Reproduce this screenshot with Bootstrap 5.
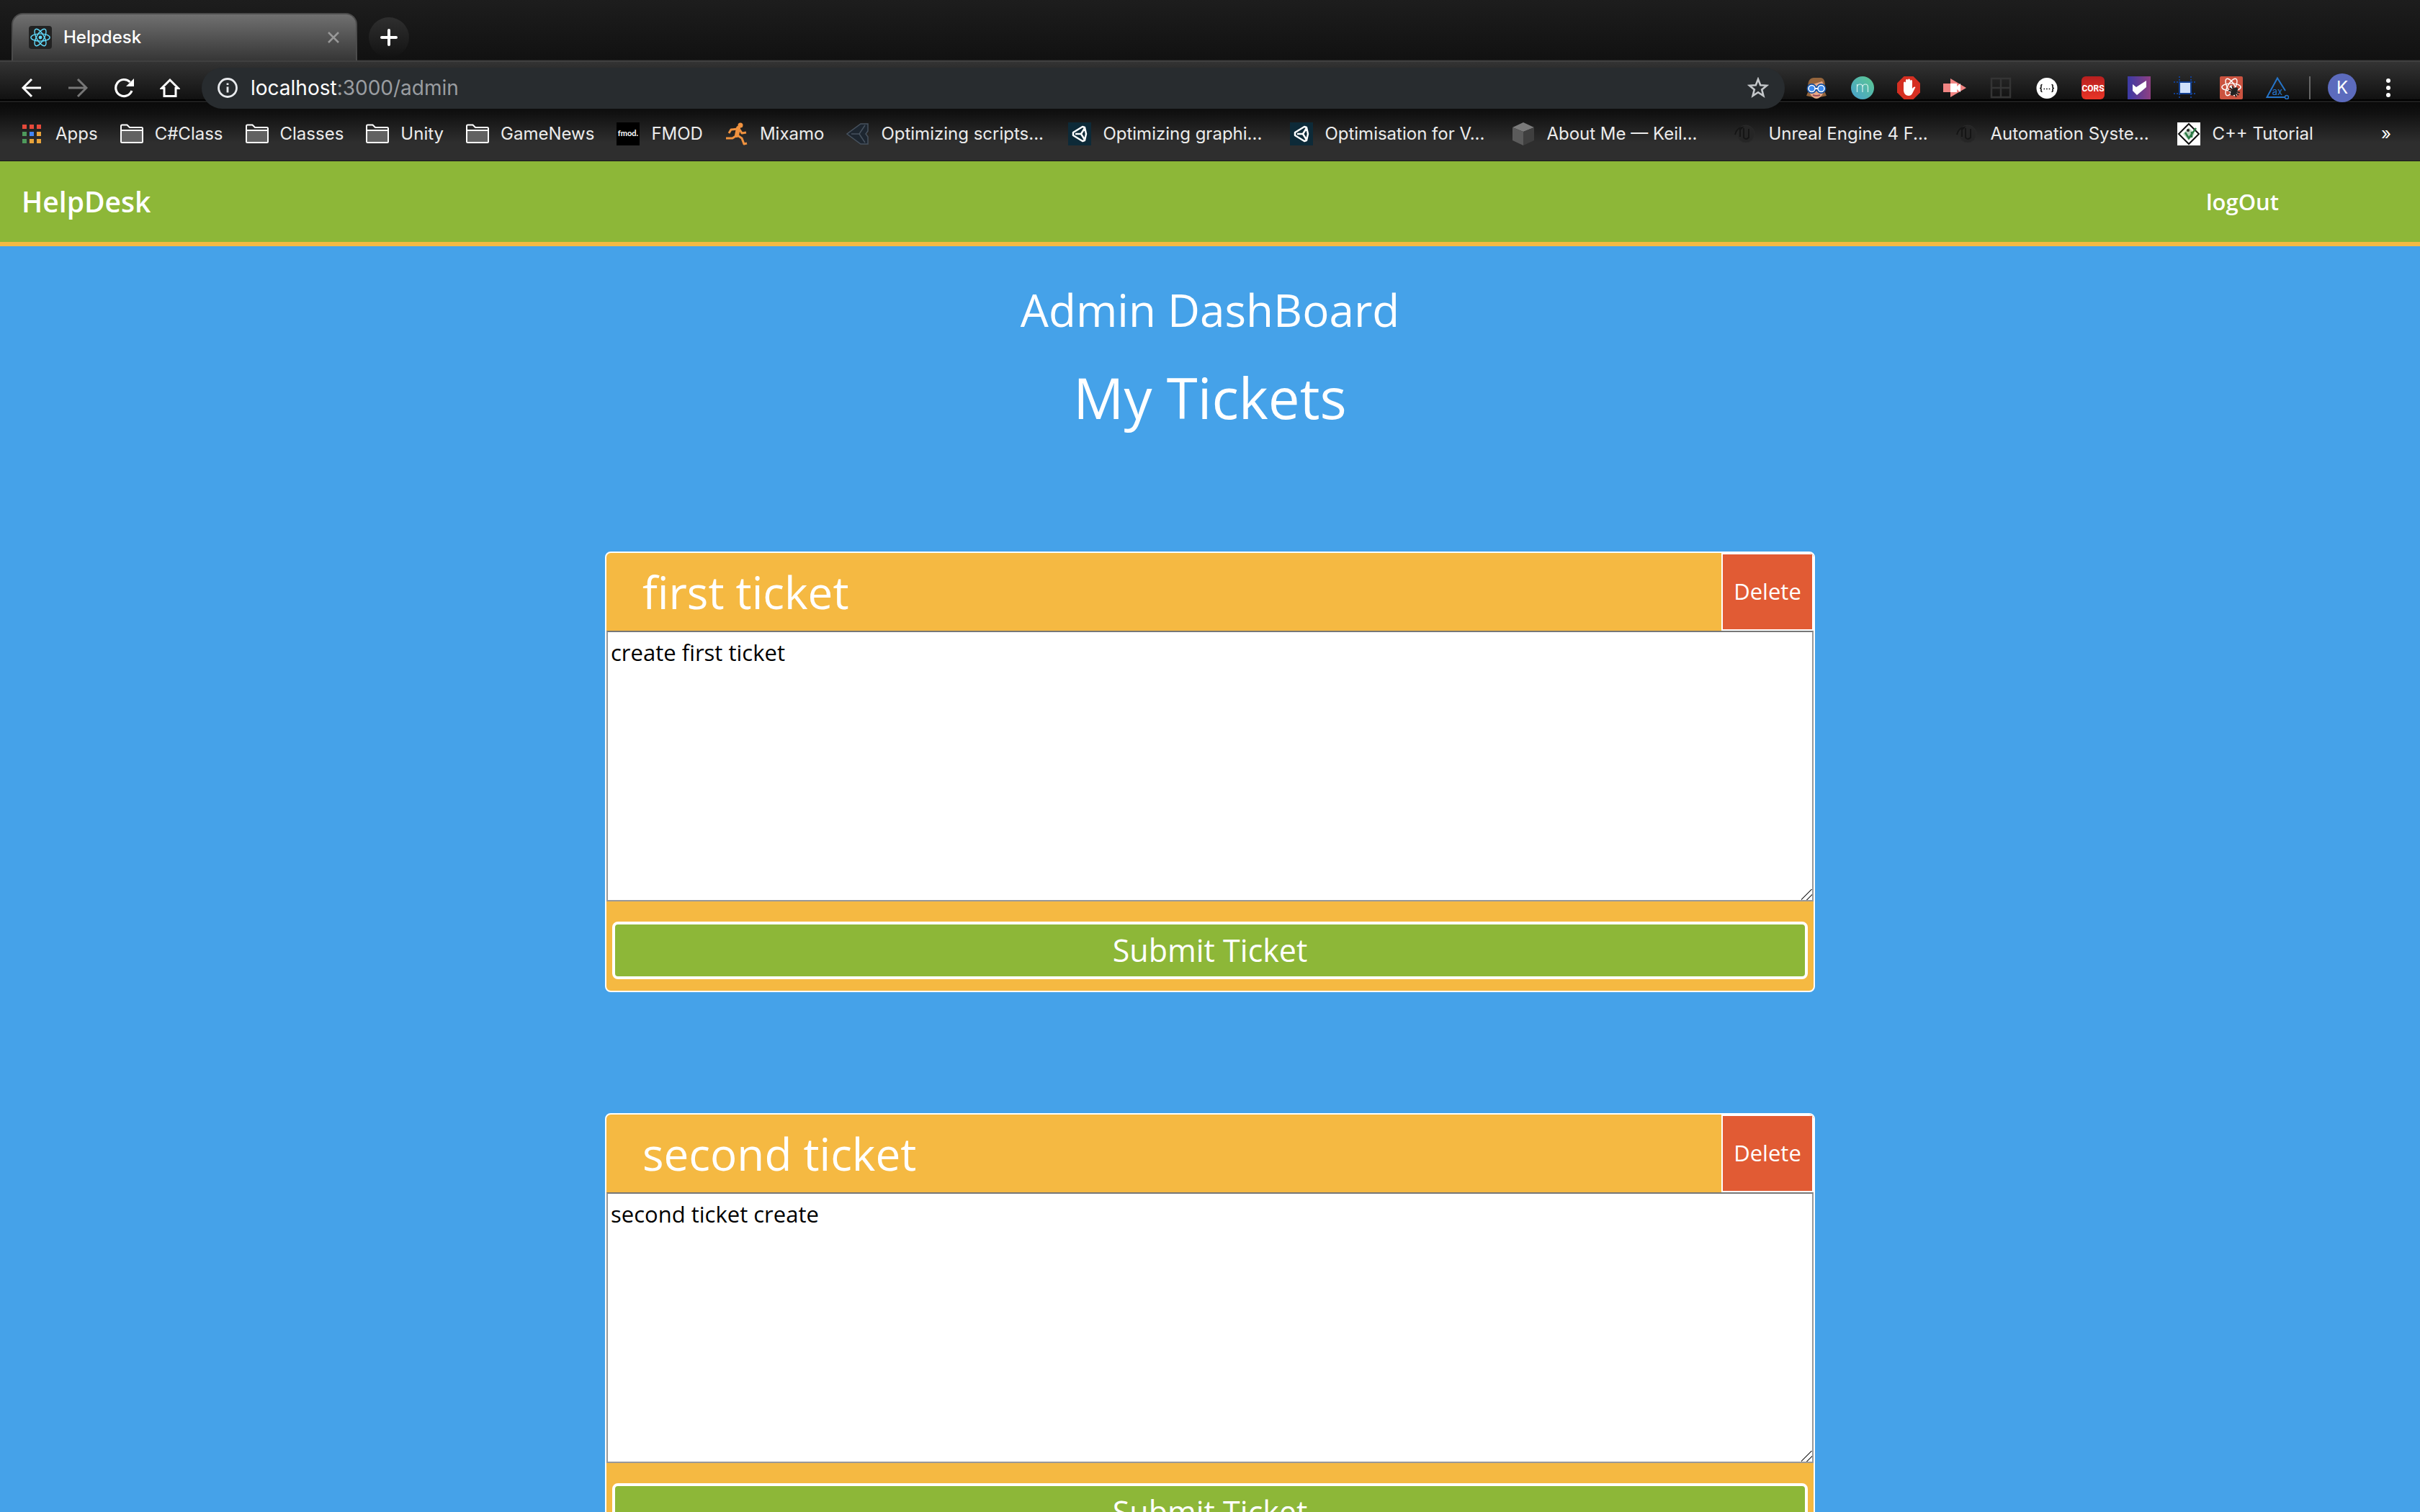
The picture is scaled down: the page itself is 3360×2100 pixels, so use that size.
<!DOCTYPE html>
<html lang="en">
<head>
<meta charset="utf-8">
<meta name="viewport" content="width=device-width, initial-scale=1">
<title>Helpdesk</title>
<link href="https://cdn.jsdelivr.net/npm/bootstrap@5.3.0/dist/css/bootstrap.min.css" rel="stylesheet">
<script src="https://cdn.jsdelivr.net/npm/bootstrap@5.3.0/dist/js/bootstrap.bundle.min.js"></script>
<style>
  :root {
    --sky: #45a2e9;
    --leaf: #8db738;
    --sun: #f5b942;
    --brick: #e15b34;
  }
  body { background: var(--sky); font-family: "Open Sans", "Noto Sans", sans-serif; }
  svg { display: block; flex: none; }
  .plain-btn { background: none; border: 0; padding: 0; color: inherit; }

  /* browser frame */
  .browser-ui { font-family: Inter, Roboto, sans-serif; color: #fff; }
  .tab-strip { height: 84px; padding-left: 16px; background: linear-gradient(#1d1d1d, #111); box-shadow: inset 0 -1px #222; }
  .browser-tab {
    width: 480px; height: 66px; padding: 0 22px;
    border: 2px solid #4b4b4b; border-bottom: 0; border-radius: 16px 16px 0 0;
    background: linear-gradient(#707070, #363636);
    font-size: 24px; line-height: 32px; font-weight: 500;
  }
  .tab-label { margin-left: 16px; }
  .tab-plus { width: 56px; height: 56px; margin: 0 0 4px 16px; border-radius: 50%; background: linear-gradient(#2f2f2f, #121212); }
  .tool-row {
    height: 76px; padding: 0 38px 0 30px;
    background: linear-gradient(#404040 0 2px, #333 2px, #111 54px, #000 54px 56px, #1e1e1e 56px 58px, #0a0a0a 58px, #121212);
  }
  .tool-group { gap: 36px; }
  .address-box {
    height: 57px; margin: 0 28px 0 30px; padding: 0 22px; border-radius: 29px;
    background: #282c2f; font-size: 28px; line-height: 36px;
  }
  .url-text { margin-left: 18px; }
  .url-dim { color: #9a9da1; }
  .ext-group { gap: 32px; }
  .tool-rule { width: 2px; height: 32px; margin: 0 24px 0 28px; background: #666; }
  .avatar-k { width: 40px; height: 40px; border-radius: 50%; background: #5c6bbd; font-size: 24px; line-height: 40px; }
  .menu-dots { margin-left: 38px; }
  .link-row {
    height: 64px; padding: 0 40px 12px 29px; border-bottom: 1px solid #1b1b1b;
    background: linear-gradient(#131313, #2e2e2e 60%);
    font-size: 24px; line-height: 32px;
  }
  .link-row a { color: #ececec; text-decoration: none; display: flex; align-items: center; gap: 16px; margin-right: 31px; white-space: nowrap; }
  .link-row a.wide-link { width: 308px; margin-right: 0; }

  /* application */
  .app-bar { height: 118px; background: var(--leaf); border-bottom: 6px solid var(--sun); padding: 0 196px 0 30px; }
  .app-bar a { color: #fff; text-decoration: none; font-weight: 600; }
  .app-name { font-size: 39px; line-height: 56px; }
  .app-exit { font-size: 31px; line-height: 48px; }
  .page-head { padding-top: 44px; color: #fff; }
  .page-head h2 { font-size: 62px; line-height: 88px; font-weight: 400; margin: 0 0 24px; }
  .page-head h1 { font-size: 78px; line-height: 108px; font-weight: 400; margin: 0; }
  .ticket-list { width: 50%; padding-top: 160px; }
  .ticket { background: var(--sun); border: 2px solid #fff; border-radius: 8px; margin-bottom: 168px; overflow: hidden; }
  .ticket-top { height: 108px; padding-left: 50px; color: #fff; }
  .ticket-top h3 { font-size: 62px; line-height: 88px; font-weight: 400; margin: 0; }
  .ticket-delete { width: 128px; padding-bottom: 4px; background: var(--brick); border: 2px solid #fff; color: #fff; font-size: 31px; line-height: 48px; }
  .ticket textarea {
    display: block; width: 100%; height: 376px; padding: 5px 4px;
    border: 2px solid #999; border-top-color: #777; outline: 0; background: #fff; color: #000; font-size: 31px; line-height: 46px;
  }
  .ticket textarea::-webkit-resizer {
    background: linear-gradient(135deg, transparent 46%, #555 46% 53%, transparent 53% 72%, #555 72% 79%, transparent 79%) #fff;
  }
  .ticket-foot { padding: 28px 8px 16px; }
  .ticket-submit { height: 80px; background: var(--leaf); border: 4px solid #fff; border-radius: 8px; color: #fff; font-size: 43px; line-height: 64px; }
</style>
</head>
<body class="vh-100 overflow-hidden d-flex flex-column">

<svg width="0" height="0" class="position-absolute" aria-hidden="true">
  <defs>
    <symbol id="folder" viewBox="0 0 32 32"><path d="M1 27V5q0-1.500 1.500-1.500H9.500L13 7H29.500Q31 7 31 8.500V26.500Q31 28 29.500 28H2.500Q1 28 1 26.500Z" fill="#2a2a2a" stroke="#fff" stroke-width="2"/><path d="M2 12H30V27H2Z" fill="#626262"/><path d="M1 11H31" stroke="#fff" stroke-width="2"/></symbol>
    <symbol id="unity" viewBox="0 0 32 32"><path d="M0 0H32V32H0Z" fill="#0d2a38"/><path d="M23 7 20 6 7 14V18L20 26 23 25 25 16ZM10 16H18M18 16 23 8M18 16 23 24" fill="none" stroke="#fff" stroke-width="2.500" stroke-linejoin="round"/></symbol>
    <symbol id="unreal" viewBox="0 0 32 32"><circle cx="17" cy="16" r="12" fill="#252525" stroke="#2a2a2a"/><path d="M2 17Q4 8 12 7L9 10V20M14 8V21Q17 25 21 21V9" fill="none" stroke="#151515" stroke-width="2"/></symbol>
    <symbol id="atom" viewBox="0 0 32 32"><g fill="none" stroke="currentColor" stroke-width="1.500"><ellipse cx="16" cy="16" rx="14" ry="5.500"/><ellipse cx="16" cy="16" rx="14" ry="5.500" transform="rotate(60 16 16)"/><ellipse cx="16" cy="16" rx="14" ry="5.500" transform="rotate(120 16 16)"/></g><circle cx="16" cy="16" r="2.600" fill="currentColor"/></symbol>
  </defs>
</svg>

<header class="browser-ui flex-shrink-0">
  <div class="tab-strip d-flex align-items-end">
    <div class="browser-tab d-flex align-items-center">
      <svg width="32" height="32" viewBox="0 0 32 32"><rect width="32" height="32" rx="4" fill="#222"/><use href="#atom" x="1" y="1" width="30" height="30" color="#61dafb"/></svg>
      <span class="tab-label">Helpdesk</span>
      <button class="plain-btn ms-auto" aria-label="Close tab"><svg width="18" height="18" viewBox="0 0 18 18"><path d="M2 2 16 16M16 2 2 16" stroke="#999" stroke-width="2.500"/></svg></button>
    </div>
    <button class="plain-btn tab-plus d-flex align-items-center justify-content-center" aria-label="New tab"><svg width="24" height="24" viewBox="0 0 24 24"><path d="M12 2V22M2 12H22" stroke="#fff" stroke-width="4" stroke-linecap="round"/></svg></button>
  </div>

  <div class="tool-row d-flex align-items-center">
    <div class="tool-group d-flex">
      <button class="plain-btn" aria-label="Back"><svg width="28" height="28" viewBox="0 0 28 28"><path d="M27 14H3M14 2 2 14 14 26" fill="none" stroke="#fff" stroke-width="3"/></svg></button>
      <button class="plain-btn" aria-label="Forward"><svg width="28" height="28" viewBox="0 0 28 28"><path d="M1 14H25M14 2 26 14 14 26" fill="none" stroke="#777" stroke-width="3"/></svg></button>
      <button class="plain-btn" aria-label="Reload"><svg width="28" height="28" viewBox="0 0 28 28"><path d="M25 18A11.500 11.500 0 1 1 22.500 6" fill="none" stroke="#fff" stroke-width="3.200"/><path d="M28 1V12H17Z" fill="#fff"/></svg></button>
      <button class="plain-btn" aria-label="Home"><svg width="28" height="28" viewBox="0 0 28 28"><path d="M2.500 14.500 14 3 25.500 14.500H22V25.500H6V14.500Z" fill="none" stroke="#fff" stroke-width="3"/></svg></button>
    </div>
    <div class="address-box d-flex align-items-center flex-grow-1">
      <svg width="28" height="28" viewBox="0 0 28 28"><circle cx="14" cy="14" r="12.500" fill="none" stroke="#e8eaed" stroke-width="2.800"/><path d="M14 12.500V20.500M14 7.500V10" stroke="#e8eaed" stroke-width="2.800"/></svg>
      <span class="url-text">localhost<span class="url-dim">:3000/admin</span></span>
      <button class="plain-btn ms-auto" aria-label="Bookmark this page"><svg width="30" height="30" viewBox="0 0 30 30"><path d="M15 3 18.200 11.200 27 11.800 20.200 17.400 22.400 26 15 21.200 7.600 26 9.800 17.400 3 11.800 11.800 11.200Z" fill="none" stroke="#c4c7ca" stroke-width="2.600"/></svg></button>
    </div>
    <div class="ext-group d-flex">
      <svg width="32" height="32" viewBox="0 0 32 32"><path d="M2 27 5 20Q2 3 12 2H22Q30 3 27 20L30 27Q16 31 2 27Z" fill="#95653c"/><path d="M5 13 24 7 27 14 25 24Q21 31 16 31T7 24Z" fill="#e8a987"/><circle cx="9.500" cy="17" r="6" fill="#3f8cf0" stroke="#1450a0" stroke-width="2"/><circle cx="22.500" cy="17" r="6" fill="#3f8cf0" stroke="#1450a0" stroke-width="2"/><circle cx="9.500" cy="17" r="4.500" fill="none" stroke="#fff" stroke-width="1.500"/><circle cx="22.500" cy="17" r="4.500" fill="none" stroke="#fff" stroke-width="1.500"/><path d="M14 17H18" stroke="#fff" stroke-width="2"/><path d="M11 26Q16 28 21 26" stroke="#9c4a58" stroke-width="2" fill="none"/></svg>
      <svg width="32" height="32" viewBox="0 0 32 32"><defs><linearGradient id="mint" x1="1" y1="0" x2="0" y2="1"><stop stop-color="#5cc98f"/><stop offset="1" stop-color="#48a0cf"/></linearGradient></defs><circle cx="16" cy="16" r="16" fill="url(#mint)"/><path d="M8.500 22V11M8.500 15Q9 11 12.500 11T16 15V22M16 15Q16.500 11 20 11T23.500 15V22" fill="none" stroke="#d7f1ee" stroke-width="1.200"/></svg>
      <svg width="32" height="32" viewBox="0 0 32 32"><path d="M9.500 0H22.500L32 9.500V22.500L22.500 32H9.500L0 22.500V9.500Z" fill="#d52f22"/><path d="M9 19V9a1.500 1.500 0 0 1 3 0V5.500a1.500 1.500 0 0 1 3 0V5a1.500 1.500 0 0 1 3 0V6.500a1.500 1.500 0 0 1 3 0V17L23 15Q24.500 14 25.500 15L21 24Q19.500 27 16 27Q10 27 9 20Z" fill="#fff"/></svg>
      <svg width="32" height="32" viewBox="0 0 32 32"><path d="M0 10H10V3L32 16 10 29V22H0Z" fill="#f18583"/><path d="M10 10H19V14L24 10V22L19 18V22H10Z" fill="#fff"/></svg>
      <svg width="32" height="32" viewBox="0 0 32 32"><path d="M3 3H29V29H3ZM16 3V29M3 16H29" fill="none" stroke="#343434" stroke-width="2.500"/></svg>
      <svg width="32" height="32" viewBox="0 0 32 32"><circle cx="16" cy="16.500" r="14.500" fill="#fff"/><path d="M9.500 11.500Q7.500 11.500 8 14T6 16.500Q8.500 16.500 8 19T9.500 21.500M22.500 11.500Q24.500 11.500 24 14T26 16.500Q23.500 16.500 24 19T22.500 21.500" fill="none" stroke="#111" stroke-width="1.600"/><path d="M11.500 17.500H21" stroke="#111" stroke-width="1.600" stroke-dasharray="1.600 2"/></svg>
      <svg width="32" height="32" viewBox="0 0 32 32"><defs><linearGradient id="corsred" x2="0" y2="1"><stop stop-color="#b81f1f"/><stop offset="1" stop-color="#e93527"/></linearGradient></defs><rect width="32" height="32" rx="6" fill="url(#corsred)"/><text x="16" y="21" text-anchor="middle" font-family="Roboto, sans-serif" font-weight="700" font-size="12" fill="#fff">CORS</text></svg>
      <svg width="32" height="32" viewBox="0 0 32 32"><defs><linearGradient id="plum"><stop stop-color="#3b3aa5"/><stop offset="1" stop-color="#8f3f82"/></linearGradient></defs><rect width="32" height="32" fill="url(#plum)"/><path d="M7 11 12 15 26 6V15L13 26 7 20Z" fill="#fff"/></svg>
      <svg width="32" height="32" viewBox="0 0 32 32"><path d="M8 0V32M24 0V32M0 8H32M0 24H32" stroke="#123f91" stroke-width="2" stroke-dasharray="2 2"/><rect x="8" y="8" width="16" height="16" fill="#d0e1fb" stroke="#123f91" stroke-width="2"/></svg>
      <svg width="32" height="32" viewBox="0 0 32 32"><rect width="32" height="32" rx="2" fill="#cb5340"/><use href="#atom" x="1" y="0" width="30" height="30" color="#fff"/><g transform="rotate(40 20 21)"><ellipse cx="20" cy="21" rx="3.500" ry="7" fill="#222"/><path d="M13 17 27 25M13 25 27 17M12 21H28" stroke="#222" stroke-width="1.800"/></g></svg>
      <svg width="32" height="32" viewBox="0 0 32 32"><path d="M27 20 16 2.500 1.500 29H26" fill="none" stroke="#2675c9" stroke-width="2"/><circle cx="29" cy="29" r="2.500" fill="none" stroke="#2675c9" stroke-width="1.500"/><text x="16" y="26" text-anchor="middle" font-family="Inter, sans-serif" font-size="13" fill="#2675c9">ax</text></svg>
    </div>
    <div class="tool-rule"></div>
    <button class="plain-btn avatar-k text-center" aria-label="Profile K">K</button>
    <button class="plain-btn menu-dots" aria-label="Menu"><svg width="12" height="28" viewBox="0 0 12 28"><g fill="#fff"><circle cx="6" cy="4" r="3"/><circle cx="6" cy="14" r="3"/><circle cx="6" cy="24" r="3"/></g></svg></button>
  </div>

  <nav class="link-row d-flex align-items-center" aria-label="Bookmarks">
    <a href="#"><svg width="32" height="32" viewBox="0 0 32 32"><path d="M2 3h6v6H2zM12 3h6v6h-6zM22 3h6v6h-6z" fill="#e5493a"/><path d="M2 13h6v6H2zM2 23h6v6H2z" fill="#4e9a5c"/><path d="M12 13h6v6h-6z" fill="#4285f4"/><path d="M22 13h6v6h-6zM12 23h6v6h-6zM22 23h6v6h-6z" fill="#e8a33a"/></svg>Apps</a>
    <a href="#"><svg width="32" height="32"><use href="#folder"/></svg>C#Class</a>
    <a href="#"><svg width="32" height="32"><use href="#folder"/></svg>Classes</a>
    <a href="#"><svg width="32" height="32"><use href="#folder"/></svg>Unity</a>
    <a href="#"><svg width="32" height="32"><use href="#folder"/></svg>GameNews</a>
    <a href="#"><svg width="32" height="32" viewBox="0 0 32 32"><path d="M0 0H32V32H0Z" fill="#000"/><text x="16" y="19" text-anchor="middle" font-family="Lato, sans-serif" font-weight="700" font-size="11" fill="#fff">fmod.</text></svg>FMOD</a>
    <a href="#"><svg width="32" height="32" viewBox="0 0 32 32"><circle cx="21" cy="4" r="3.500" fill="#f0923f"/><path d="M18 8 16 18" stroke="#f0923f" stroke-width="6" stroke-linecap="round"/><path d="M17 9 8 10 5 15M20 10 23 15 29 14M16 18 10 22 1 22M17 18 23 22 26 30 30 29" fill="none" stroke="#f0923f" stroke-width="3" stroke-linejoin="round"/></svg>Mixamo</a>
    <a href="#" class="wide-link"><svg width="32" height="32" viewBox="0 0 32 32"><path d="M30 2 20 2 1 16 20 30H30V20L27 16 30 12ZM7 16H18L26 4M18 16 26 28" fill="#1d2630" stroke="#47525e" stroke-width="1.500"/></svg>Optimizing scripts...</a>
    <a href="#" class="wide-link"><svg width="32" height="32"><use href="#unity"/></svg>Optimizing graphi...</a>
    <a href="#" class="wide-link"><svg width="32" height="32"><use href="#unity"/></svg>Optimisation for V...</a>
    <a href="#" class="wide-link"><svg width="32" height="32" viewBox="0 0 32 32"><path d="M16 0 31 7 16 13 1 7Z" fill="#7b7b7b"/><path d="M1 7 16 13V32L1 25Z" fill="#5b5b5b"/><path d="M31 7 16 13V32L31 25Z" fill="#3f3f3f"/></svg>About Me — Keil...</a>
    <a href="#" class="wide-link"><svg width="32" height="32"><use href="#unreal"/></svg>Unreal Engine 4 F...</a>
    <a href="#" class="wide-link"><svg width="32" height="32"><use href="#unreal"/></svg>Automation Syste...</a>
    <a href="#"><svg width="32" height="32" viewBox="0 0 32 32"><path d="M0 0H32V32H0Z" fill="#fff"/><path d="M16 2 30 16 16 30 2 16Z" fill="none" stroke="#111" stroke-width="2"/><path d="M16 7 24 16 16 25 8 16Z" fill="#bcd2bf"/><path d="M11 14 16 22 26 8M20 13V21" fill="none" stroke="#2b7a46" stroke-width="2.500"/><circle cx="15" cy="11" r="2" fill="#222"/></svg>C++ Tutorial</a>
    <button class="plain-btn ms-auto" aria-label="More bookmarks">»</button>
  </nav>
</header>

<nav class="app-bar d-flex align-items-center justify-content-between flex-shrink-0">
  <a href="#" class="app-name">HelpDesk</a>
  <a href="#" class="app-exit">logOut</a>
</nav>

<main class="flex-grow-1 overflow-hidden">
  <div class="page-head text-center">
    <h2>Admin DashBoard</h2>
    <h1>My Tickets</h1>
  </div>
  <div class="ticket-list mx-auto">
    <form class="ticket">
      <div class="ticket-top d-flex align-items-center justify-content-between">
        <h3 id="t1">first ticket</h3>
        <button type="button" class="ticket-delete align-self-stretch">Delete</button>
      </div>
      <textarea aria-labelledby="t1" spellcheck="false">create first ticket</textarea>
      <div class="ticket-foot"><button type="button" class="ticket-submit w-100 d-flex align-items-center justify-content-center">Submit Ticket</button></div>
    </form>
    <form class="ticket">
      <div class="ticket-top d-flex align-items-center justify-content-between">
        <h3 id="t2">second ticket</h3>
        <button type="button" class="ticket-delete align-self-stretch">Delete</button>
      </div>
      <textarea aria-labelledby="t2" spellcheck="false">second ticket create</textarea>
      <div class="ticket-foot"><button type="button" class="ticket-submit w-100 d-flex align-items-center justify-content-center">Submit Ticket</button></div>
    </form>
  </div>
</main>
</body>
</html>
